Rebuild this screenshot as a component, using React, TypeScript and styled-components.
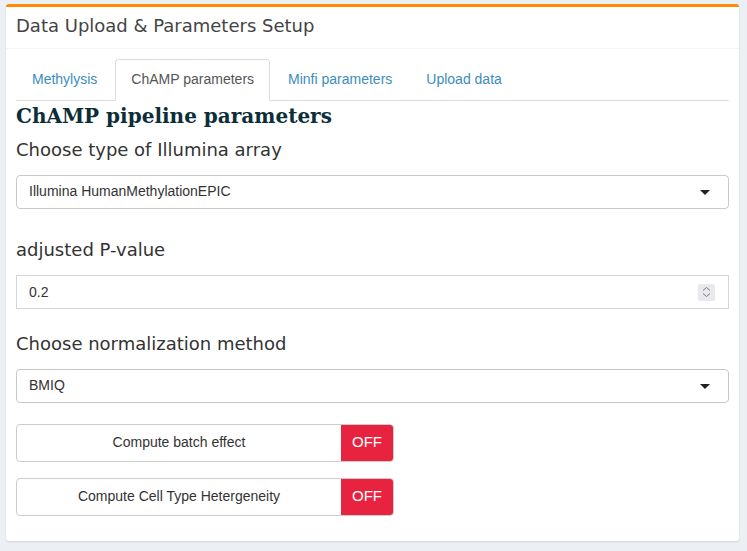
import React, { useState } from 'react';
import styled, { createGlobalStyle } from 'styled-components';

const GlobalStyle = createGlobalStyle`
  body {
    margin: 0;
    background: #ecf0f5;
    font-family: "Liberation Sans", Arial, sans-serif;
  }
`;

const Page = styled.div`
  padding: 4px 8px 10px 6px;
`;

const Box = styled.div`
  background: #fff;
  border-top: 3px solid #ff8c00;
  border-radius: 3px;
  box-shadow: 0 1px 2px rgba(0, 0, 0, 0.12);
`;

const BoxHeader = styled.div`
  padding: 0 10px 4px;
  height: 42px;
  box-sizing: border-box;
  display: flex;
  align-items: center;
  border-bottom: 1px solid #f4f4f4;
`;

const Title = styled.h3`
  margin: 0;
  font-family: "DejaVu Sans", sans-serif;
  font-weight: normal;
  font-size: 18px;
  color: #444;
`;

const BoxBody = styled.div`
  padding: 10px;
`;

const TabList = styled.ul`
  list-style: none;
  margin: 0;
  padding: 0;
  display: flex;
  border-bottom: 1px solid #ddd;
`;

const Tab = styled.li<{ $active?: boolean }>`
  margin-bottom: -1px;
  margin-right: 2px;
  padding: 0 15px 3px;
  height: 42px;
  box-sizing: border-box;
  display: flex;
  align-items: center;
  font-size: 14px;
  cursor: pointer;
  color: ${p => (p.$active ? '#555' : '#3c8dbc')};
  background: ${p => (p.$active ? '#fff' : 'transparent')};
  border: 1px solid ${p => (p.$active ? '#ddd' : 'transparent')};
  border-bottom-color: ${p => (p.$active ? '#fff' : 'transparent')};
  border-radius: 4px 4px 0 0;
`;

const Heading = styled.h3`
  margin: 1px 0 8px;
  font-family: "DejaVu Serif", serif;
  font-weight: bold;
  font-size: 20px;
  line-height: 28px;
  color: #0b2e38;
`;

const Label = styled.label<{ $gap?: number }>`
  display: block;
  margin-top: ${p => p.$gap ?? 0}px;
  margin-bottom: 13px;
  font-family: "DejaVu Sans", sans-serif;
  font-size: 18px;
  line-height: 24px;
  color: #333;
`;

const SelectBox = styled.div`
  height: 34px;
  box-sizing: border-box;
  border: 1px solid #c8c8c8;
  border-radius: 4px;
  display: flex;
  align-items: center;
  justify-content: space-between;
  padding: 0 18px 3px 12px;
  font-size: 14px;
  color: #333;
  background: #fff;
`;

const Caret = styled.span`
  width: 0;
  height: 0;
  margin-top: 3px;
  border-left: 5px solid transparent;
  border-right: 5px solid transparent;
  border-top: 5px solid #222;
`;

const NumberBox = styled.div`
  height: 34px;
  box-sizing: border-box;
  border: 1px solid #d2d6de;
  display: flex;
  align-items: center;
  padding: 0 13px 0 12px;
`;

const NumberInput = styled.input`
  flex: 1;
  border: none;
  outline: none;
  padding: 0 0 1px;
  font-family: "Liberation Sans", Arial, sans-serif;
  font-size: 14px;
  color: #333;
  background: transparent;
`;

const Spinner = styled.span`
  width: 17px;
  height: 17px;
  background: #e9e9ed;
  border-radius: 2px;
  display: flex;
  align-items: center;
  justify-content: center;
`;

const ToggleButton = styled.div<{ $gap?: number }>`
  width: 378px;
  height: 38px;
  box-sizing: border-box;
  margin-top: ${p => p.$gap ?? 0}px;
  border: 1px solid #ccc;
  border-radius: 4px;
  display: flex;
  overflow: hidden;
  font-size: 14px;
  cursor: pointer;
`;

const ToggleLabel = styled.span`
  flex: 1;
  display: flex;
  align-items: center;
  justify-content: center;
  padding-bottom: 2px;
  color: #333;
`;

const ToggleState = styled.span<{ $on: boolean }>`
  width: 52px;
  display: flex;
  align-items: center;
  justify-content: center;
  padding-bottom: 3px;
  box-sizing: border-box;
  font-size: 15px;
  color: #fff;
  background: ${p => (p.$on ? '#00a65a' : '#e8233f')};
`;

const tabs = ['Methylysis', 'ChAMP parameters', 'Minfi parameters', 'Upload data'];

const Toggle = ({ label, gap }: { label: string; gap?: number }) => {
  const [on, setOn] = useState(false);
  return (
    <ToggleButton $gap={gap} onClick={() => setOn(!on)}>
      <ToggleLabel>{label}</ToggleLabel>
      <ToggleState $on={on}>{on ? 'ON' : 'OFF'}</ToggleState>
    </ToggleButton>
  );
};

const App = () => {
  const [active, setActive] = useState(1);
  return (
    <Page>
      <GlobalStyle />
      <Box>
        <BoxHeader>
          <Title>Data Upload &amp; Parameters Setup</Title>
        </BoxHeader>
        <BoxBody>
          <TabList>
            {tabs.map((t, i) => (
              <Tab key={t} $active={i === active} onClick={() => setActive(i)}>
                {t}
              </Tab>
            ))}
          </TabList>
          <Heading>ChAMP pipeline parameters</Heading>
          <Label>Choose type of Illumina array</Label>
          <SelectBox>
            Illumina HumanMethylationEPIC
            <Caret />
          </SelectBox>
          <Label $gap={29}>adjusted P-value</Label>
          <NumberBox>
            <NumberInput defaultValue="0.2" />
            <Spinner>
              <svg width="9" height="12" viewBox="0 0 9 12">
                <path d="M1 4.5 L4.5 1.5 L8 4.5 M1 7.5 L4.5 10.5 L8 7.5" fill="none" stroke="#777" strokeWidth="1" />
              </svg>
            </Spinner>
          </NumberBox>
          <Label $gap={23}>Choose normalization method</Label>
          <SelectBox>
            BMIQ
            <Caret />
          </SelectBox>
          <Toggle label="Compute batch effect" gap={21} />
          <Toggle label="Compute Cell Type Hetergeneity" gap={16} />
          <div style={{ height: 15 }} />
        </BoxBody>
      </Box>
    </Page>
  );
};

export default App;
